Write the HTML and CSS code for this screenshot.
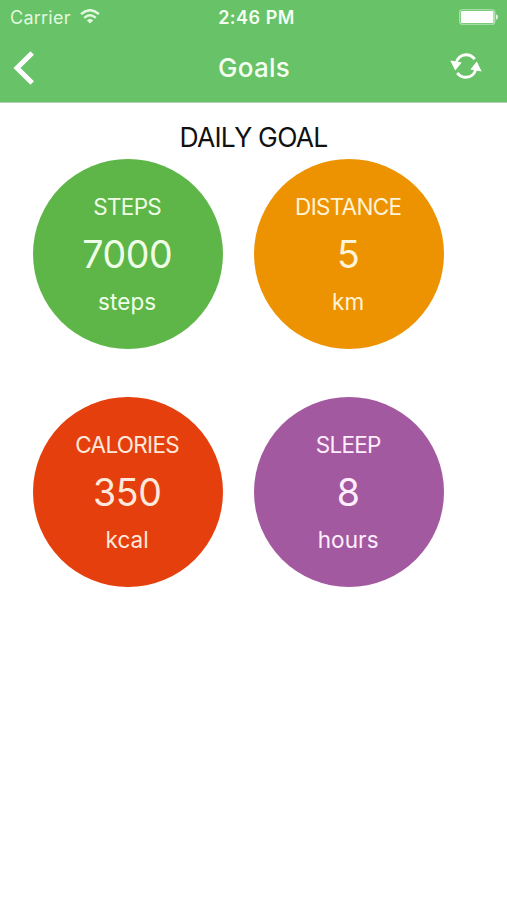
FILE: index.html
```html
<!DOCTYPE html>
<html lang="en">
<head>
<meta charset="utf-8">
<title>Goals</title>
<link rel="stylesheet" href="styles.css">
</head>
<body>
<header class="header">
  <div class="status">
    <div class="carrier">
      <span>Carrier</span>
      <svg class="wifi" width="20" height="15" viewBox="0 0 20 15" fill="none" stroke="currentColor" stroke-width="2.4">
        <path d="M1 5.2Q10-2.8 19 5.2M4.2 8.9Q10 3.8 15.8 8.9"/>
        <path d="M6.8 11.4Q10 8.5 13.2 11.4L10 14.6Z" fill="currentColor" stroke="none"/>
      </svg>
    </div>
    <time class="time">2:46 PM</time>
    <svg class="battery" width="40" height="16" viewBox="0 0 40 16">
      <rect x=".75" y=".75" width="35" height="14.5" rx="2.5" fill="none" stroke="#b5e5b5" stroke-width="1.2"/>
      <rect x="2" y="2" width="32.5" height="12" rx="1.2" fill="#fff"/>
      <path d="M37 5.2Q39 5.8 39 8T37 10.8Z" fill="#e2f7e2"/>
    </svg>
  </div>
  <nav class="nav">
    <svg class="back" width="22" height="34" viewBox="0 0 22 34" fill="none" stroke="#fff" stroke-width="5">
      <path d="M19.2 2L4 17L19.2 32"/>
    </svg>
    <h1 class="title">Goals</h1>
    <svg class="refresh" width="32" height="28" viewBox="0 0 32 28" fill="none" stroke="#fff" stroke-width="3">
      <path d="M6 11.5C7.2 6 11.2 2.7 16 2.7C19.6 2.7 22.7 4.4 24.7 7.2M26 16.5C24.8 22 20.8 25.3 16 25.3C12.4 25.3 9.3 23.6 7.3 20.8"/>
      <path d="M.3 8.6L11.7 10.6L5.2 18.4ZM31.7 19.4L20.3 17.4L26.8 9.6Z" fill="#fff" stroke="none"/>
    </svg>
  </nav>
</header>
<main>
  <h2 class="heading">DAILY GOAL</h2>
  <div class="goals">
    <section class="goal steps"><h3 class="label">STEPS</h3><div class="value">7000</div><div class="unit">steps</div></section>
    <section class="goal distance"><h3 class="label">DISTANCE</h3><div class="value">5</div><div class="unit">km</div></section>
    <section class="goal calories"><h3 class="label">CALORIES</h3><div class="value">350</div><div class="unit">kcal</div></section>
    <section class="goal sleep"><h3 class="label">SLEEP</h3><div class="value">8</div><div class="unit">hours</div></section>
  </div>
</main>
</body>
</html>
```
FILE: styles.css
```css
* { box-sizing: border-box; }
body { margin: 0; min-height: 900px; background: #fff; font-family: Inter, "Liberation Sans", sans-serif; }
h1, h2, h3 { margin: 0; }
.header { height: 103px; background: #68c268; color: #f4fff0; border-bottom: 1px solid #b3ceb0; }
.status { height: 34px; padding: 0 8px 0 10px; display: grid; grid-template-columns: 1fr auto 1fr; align-items: center; }
.carrier { display: flex; align-items: center; gap: 9px; font-size: 18px; font-weight: 400; letter-spacing: .25px; line-height: 35px; color: #e2f9df; }
.wifi { margin-top: -2px; }
.time { font-size: 18px; font-weight: 600; letter-spacing: .5px; line-height: 35px; padding-left: 4px; }
.battery { justify-self: end; margin-top: -1px; }
.nav { height: 68px; padding: 0 25px 0 13px; display: grid; grid-template-columns: 1fr auto 1fr; align-items: center; }
.title { font-size: 26px; font-weight: 500; letter-spacing: .3px; line-height: 66px; padding-left: 13px; }
.refresh { justify-self: end; margin-top: -4px; }
.heading { height: 56px; line-height: 69px; text-align: center; font-size: 26.5px; font-weight: 400; letter-spacing: -.75px; color: #111; }
.goals { display: grid; grid-template-columns: 190px 190px; column-gap: 31px; row-gap: 47.5px; padding-left: 32.7px; }
.goal { height: 190px; padding: 34px 1px 0 0; border-radius: 50%; text-align: center; }
.label, .unit { font-size: 22.5px; font-weight: 400; line-height: 28px; }
.label { letter-spacing: -.7px; }
.unit { letter-spacing: .1px; }
.value { font-size: 37.5px; font-weight: 400; letter-spacing: -.4px; line-height: 46px; margin: 11px 0 10px; }
.steps { background: #5eb548; color: #efffe7; }
.distance { background: #ed9200; color: #fff4d7; }
.calories { background: #e53f0d; color: #ffe9dc; }
.sleep { background: #a3599f; color: #ffeefe; }
```
